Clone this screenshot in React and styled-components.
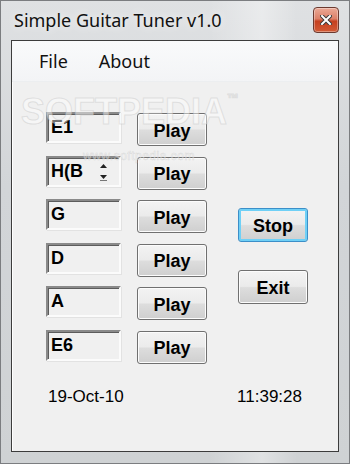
import React from 'react'
import styled, { createGlobalStyle } from 'styled-components'

const Global = createGlobalStyle`
  html, body { margin: 0; padding: 0; background: #fff; }
  body { width: 350px; height: 464px; overflow: hidden; }
`

const notes = [
  { name: 'E1' },
  { name: 'H(B', spin: true },
  { name: 'G' },
  { name: 'D' },
  { name: 'A' },
  { name: 'E6' },
]

const SpinArrows = () => (
  <Spin width="9" height="20" viewBox="0 0 9 20">
    <path d="M1 7 L4.5 3 L8 7 Z" fill="#222" />
    <path d="M1 14 L4.5 18 L8 14 Z" fill="#222" />
    <rect x="1" y="19" width="7" height="1" fill="#777" />
  </Spin>
)

const CloseGlyph = () => (
  <svg width="12" height="10" viewBox="0 0 12 10">
    <path d="M2 1 L10 9 M10 1 L2 9" stroke="#3a3a3a" strokeWidth="4" strokeLinecap="square" />
    <path d="M2 1 L10 9 M10 1 L2 9" stroke="#fff" strokeWidth="2" strokeLinecap="square" />
  </svg>
)

const App = () => {
  return (
    <>
      <Global />
      <Window>
        <TitleBar>
          <Title>Simple Guitar Tuner v1.0</Title>
          <CloseButton><CloseGlyph /></CloseButton>
        </TitleBar>
        <Client>
          <MenuBar>
            <MenuItem>File</MenuItem>
            <MenuItem>About</MenuItem>
          </MenuBar>
          <Body>
            <Watermark>
              <Mark>SOFTPEDIA<Tm>™</Tm></Mark>
              <Url>www.softpedia.com</Url>
            </Watermark>
            <Controls>
              <Strings>
                {notes.map((n) => (
                  <Row key={n.name}>
                    <NoteBox>
                      {n.name}
                      {n.spin && <SpinArrows />}
                    </NoteBox>
                    <Button>Play</Button>
                  </Row>
                ))}
              </Strings>
              <Side>
                <Button $focused>Stop</Button>
                <Button>Exit</Button>
              </Side>
            </Controls>
            <Footer>
              <span>19-Oct-10</span>
              <span>11:39:28</span>
            </Footer>
          </Body>
        </Client>
      </Window>
    </>
  )
}

const Window = styled.div`
width: 350px;
height: 464px;
box-sizing: border-box;
padding: 0 10px 11px 10px;
display: flex;
flex-direction: column;
border: 1px solid #7b7d80;
background:
  linear-gradient(90deg, rgba(255,255,255,0) 60%, rgba(255,255,255,0.35) 75%, rgba(255,255,255,0) 85%),
  linear-gradient(180deg, #dfe1e3 0%, #d2d5d8 40%, #cfd2d4 100%);
`

const TitleBar = styled.div`
height: 39px;
display: flex;
align-items: center;
justify-content: space-between;
`

const Title = styled.div`
font-family: "Noto Sans", "Open Sans", sans-serif;
font-size: 18px;
color: #111;
margin-left: 3px;
margin-top: -2px;
text-shadow: 0 0 8px rgba(255,255,255,0.9);
`

const CloseButton = styled.div`
width: 26px;
height: 26px;
margin-top: -2px;
box-sizing: border-box;
border: 1px solid #6b3a30;
border-radius: 4px;
display: flex;
align-items: center;
justify-content: center;
background: linear-gradient(180deg, #eba996 0%, #dc8068 45%, #c6401f 55%, #d25a35 100%);
box-shadow: inset 0 0 0 1px rgba(255,255,255,0.35);
`

const Client = styled.div`
flex: 1;
display: flex;
flex-direction: column;
border: 1px solid #3c3c3c;
box-shadow: inset 1px 1px 0 #fff;
background: #f0f0f0;
`

const MenuBar = styled.div`
height: 40px;
display: flex;
align-items: center;
padding-left: 27px;
gap: 31px;
background: linear-gradient(180deg, #f9fafb 0%, #f3f4f6 100%);
border-bottom: 1px solid #eceef0;
`

const MenuItem = styled.div`
font-family: "Noto Sans", "Open Sans", sans-serif;
font-size: 18px;
color: #111;
`

const Body = styled.div`
position: relative;
flex: 1;
display: flex;
flex-direction: column;
padding: 30px 36px 0 34px;
`

const Watermark = styled.div`
position: absolute;
z-index: 2;
left: 9px;
top: 9px;
pointer-events: none;
font-family: "Liberation Sans", Arial, sans-serif;
font-weight: bold;
`

const Mark = styled.div`
font-size: 36px;
color: rgba(255,255,255,0.45);
-webkit-text-stroke: 1px rgba(190,190,190,0.4);
`

const Tm = styled.span`
font-size: 12px;
vertical-align: top;
`

const Url = styled.div`
margin: 16px 0 0 62px;
font-size: 12px;
font-weight: normal;
letter-spacing: 0.5px;
color: rgba(255,255,255,0.5);
-webkit-text-stroke: 0.5px rgba(175,175,175,0.4);
`

const Controls = styled.div`
position: relative;
display: flex;
gap: 31px;
`

const Strings = styled.div`
display: flex;
flex-direction: column;
`

const Row = styled.div`
height: 43.5px;
display: flex;
align-items: flex-start;
gap: 16px;
`

const NoteBox = styled.div`
width: 75px;
height: 31px;
box-sizing: border-box;
display: flex;
align-items: center;
justify-content: space-between;
padding: 0 11px 0 3px;
border-style: solid;
border-width: 2px;
border-color: #8a8a8a #fbfbfb #fbfbfb #8a8a8a;
box-shadow: inset 1px 1px 0 #5c5c5c, 1px 1px 0 #e2e2e2;
background: #f0f0f0;
font-family: "Liberation Sans", Arial, sans-serif;
font-weight: bold;
font-size: 18px;
color: #000;
`

const Spin = styled.svg`
display: block;
`

const Button = styled.div`
width: 70px;
height: 33px;
margin-top: 1px;
box-sizing: border-box;
display: flex;
align-items: center;
justify-content: center;
padding-top: 3px;
border: 1px solid ${(p) => (p.$focused ? '#3c8fc8' : '#707070')};
border-radius: 3px;
background: linear-gradient(180deg, #f3f3f3 0%, #ebebeb 48%, #dddddd 52%, #cfcfcf 100%);
box-shadow: ${(p) => (p.$focused ? 'inset 0 0 0 2px #6fd0f6' : 'inset 0 0 0 1px #fcfcfc')};
font-family: "Liberation Sans", Arial, sans-serif;
font-weight: bold;
font-size: 18px;
color: #000;
`

const Side = styled.div`
display: flex;
flex-direction: column;
gap: 27px;
padding-top: 95px;
& > div { height: 34px; }
`

const Footer = styled.div`
display: flex;
justify-content: space-between;
margin-top: 14px;
padding-left: 2px;
font-family: "Liberation Sans", Arial, sans-serif;
font-size: 17px;
color: #000;
`

export default App
